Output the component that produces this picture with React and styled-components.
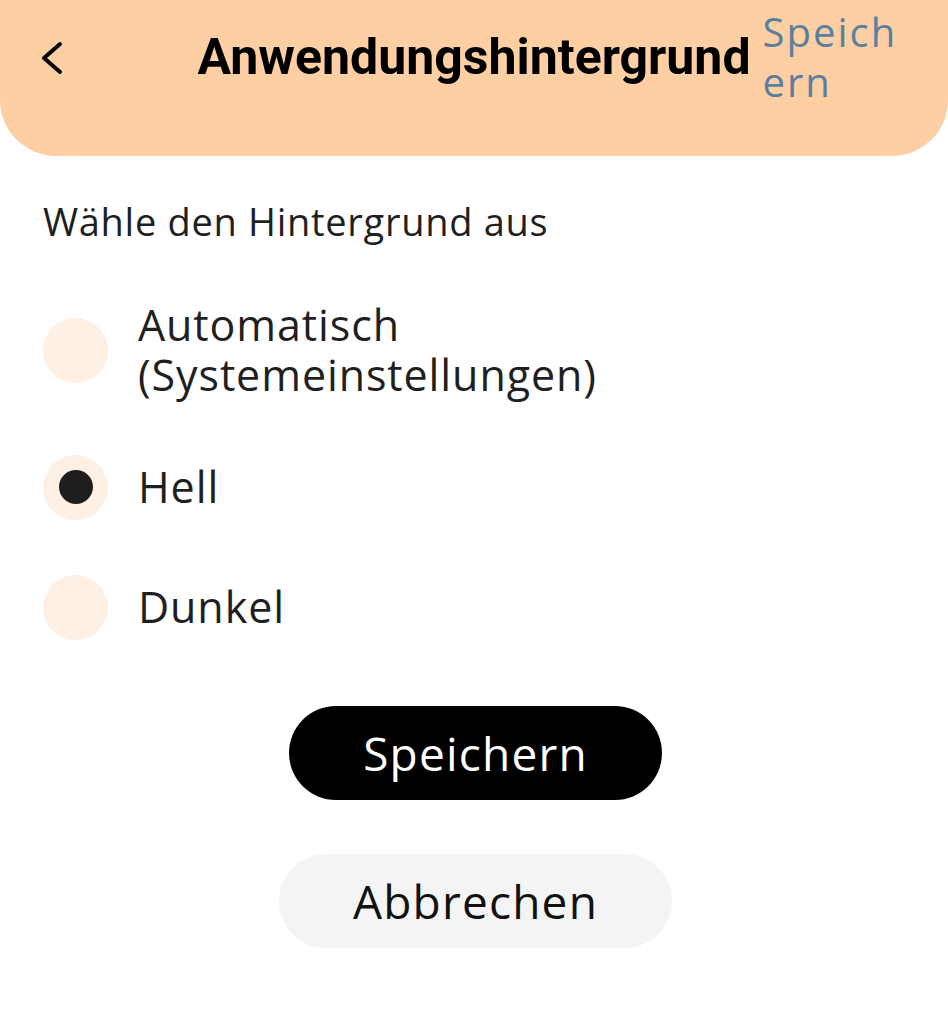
import React, { useState } from "react";
import styled, { createGlobalStyle } from "styled-components";

const Global = createGlobalStyle`
  html, body { margin: 0; padding: 0; background: #ffffff; }
  body { font-family: "Open Sans", "Noto Sans", sans-serif; color: #1f1f1f; }
  * { box-sizing: border-box; }
`;

const Screen = styled.div`
  width: 948px;
  min-height: 1024px;
  background: #ffffff;
  display: flex;
  flex-direction: column;
`;

const Header = styled.header`
  height: 156px;
  background: #fecfa2;
  border-radius: 0 0 56px 56px;
  display: grid;
  grid-template-columns: 1fr auto 1fr;
  column-gap: 12px;
  align-items: start;
`;

const BackButton = styled.button`
  justify-self: start;
  border: 0;
  background: transparent;
  padding: 0;
  margin: 40px 0 0 38px;
  width: 28px;
  height: 36px;
  display: flex;
  align-items: center;
  justify-content: center;
  cursor: pointer;
`;

const Title = styled.h1`
  margin: 27px 0 0;
  font-family: "Roboto", "Open Sans", sans-serif;
  font-weight: 700;
  font-size: 50px;
  line-height: 60px;
  color: #000;
  white-space: nowrap;
`;

const HeaderAction = styled.a`
  justify-self: start;
  margin-top: 7px;
  width: 140px;
  font-family: "Open Sans", sans-serif;
  font-size: 40px;
  line-height: 50px;
  letter-spacing: 2px;
  color: #5b7f9f;
  word-break: break-all;
  cursor: pointer;
`;

const Body = styled.main`
  padding: 41px 40px 0 43px;
  display: flex;
  flex-direction: column;
`;

const Prompt = styled.p`
  margin: 0;
  font-size: 38px;
  line-height: 48px;
  letter-spacing: 0.7px;
  color: #1f1f1f;
`;

const OptionList = styled.div`
  display: flex;
  flex-direction: column;
  gap: 54px;
  margin-top: 55px;
`;

const Option = styled.label`
  display: flex;
  align-items: center;
  gap: 30px;
  min-height: 66px;
  cursor: pointer;
`;

const RadioDisc = styled.span`
  flex: 0 0 65px;
  width: 65px;
  height: 65px;
  border-radius: 50%;
  background: #fef0e4;
  display: flex;
  align-items: center;
  justify-content: center;
  &::after {
    content: "";
    width: 34px;
    height: 34px;
    border-radius: 50%;
    background: #1e1e1e;
    display: ${(p) => (p.$checked ? "block" : "none")};
  }
`;

const OptionLabel = styled.span`
  font-size: 43px;
  line-height: 50px;
  letter-spacing: 0.9px;
  color: #1f1f1f;
`;

const Actions = styled.div`
  display: flex;
  flex-direction: column;
  align-items: center;
  gap: 54px;
  margin-top: 66px;
`;

const PillButton = styled.button`
  border: 0;
  border-radius: 47px;
  height: 94px;
  padding: 0 74px;
  background: ${(p) => (p.$primary ? "#000" : "#f4f4f4")};
  color: ${(p) => (p.$primary ? "#fff" : "#111")};
  font-family: "Open Sans", sans-serif;
  font-size: 46px;
  letter-spacing: 1.2px;
  cursor: pointer;
`;

const options = [
  { id: "auto", label: ["Automatisch", "(Systemeinstellungen)"] },
  { id: "light", label: ["Hell"] },
  { id: "dark", label: ["Dunkel"] },
];

export default function App() {
  const [theme, setTheme] = useState("light");
  return (
    <>
      <Global />
      <Screen>
        <Header>
          <BackButton aria-label="Zurück">
            <svg width="24" height="34" viewBox="0 0 24 34" fill="none">
              <path d="M20 3 L4 17 L20 31" stroke="#000" strokeWidth="4" strokeLinecap="round" strokeLinejoin="round" />
            </svg>
          </BackButton>
          <Title>Anwendungshintergrund</Title>
          <HeaderAction>Speichern</HeaderAction>
        </Header>
        <Body>
          <Prompt>Wähle den Hintergrund aus</Prompt>
          <OptionList>
            {options.map((o) => (
              <Option key={o.id} onClick={() => setTheme(o.id)}>
                <RadioDisc $checked={theme === o.id} />
                <OptionLabel>
                  {o.label.map((l, i) => (
                    <React.Fragment key={i}>
                      {i > 0 && <br />}
                      {l}
                    </React.Fragment>
                  ))}
                </OptionLabel>
              </Option>
            ))}
          </OptionList>
          <Actions>
            <PillButton $primary>Speichern</PillButton>
            <PillButton>Abbrechen</PillButton>
          </Actions>
        </Body>
      </Screen>
    </>
  );
}
